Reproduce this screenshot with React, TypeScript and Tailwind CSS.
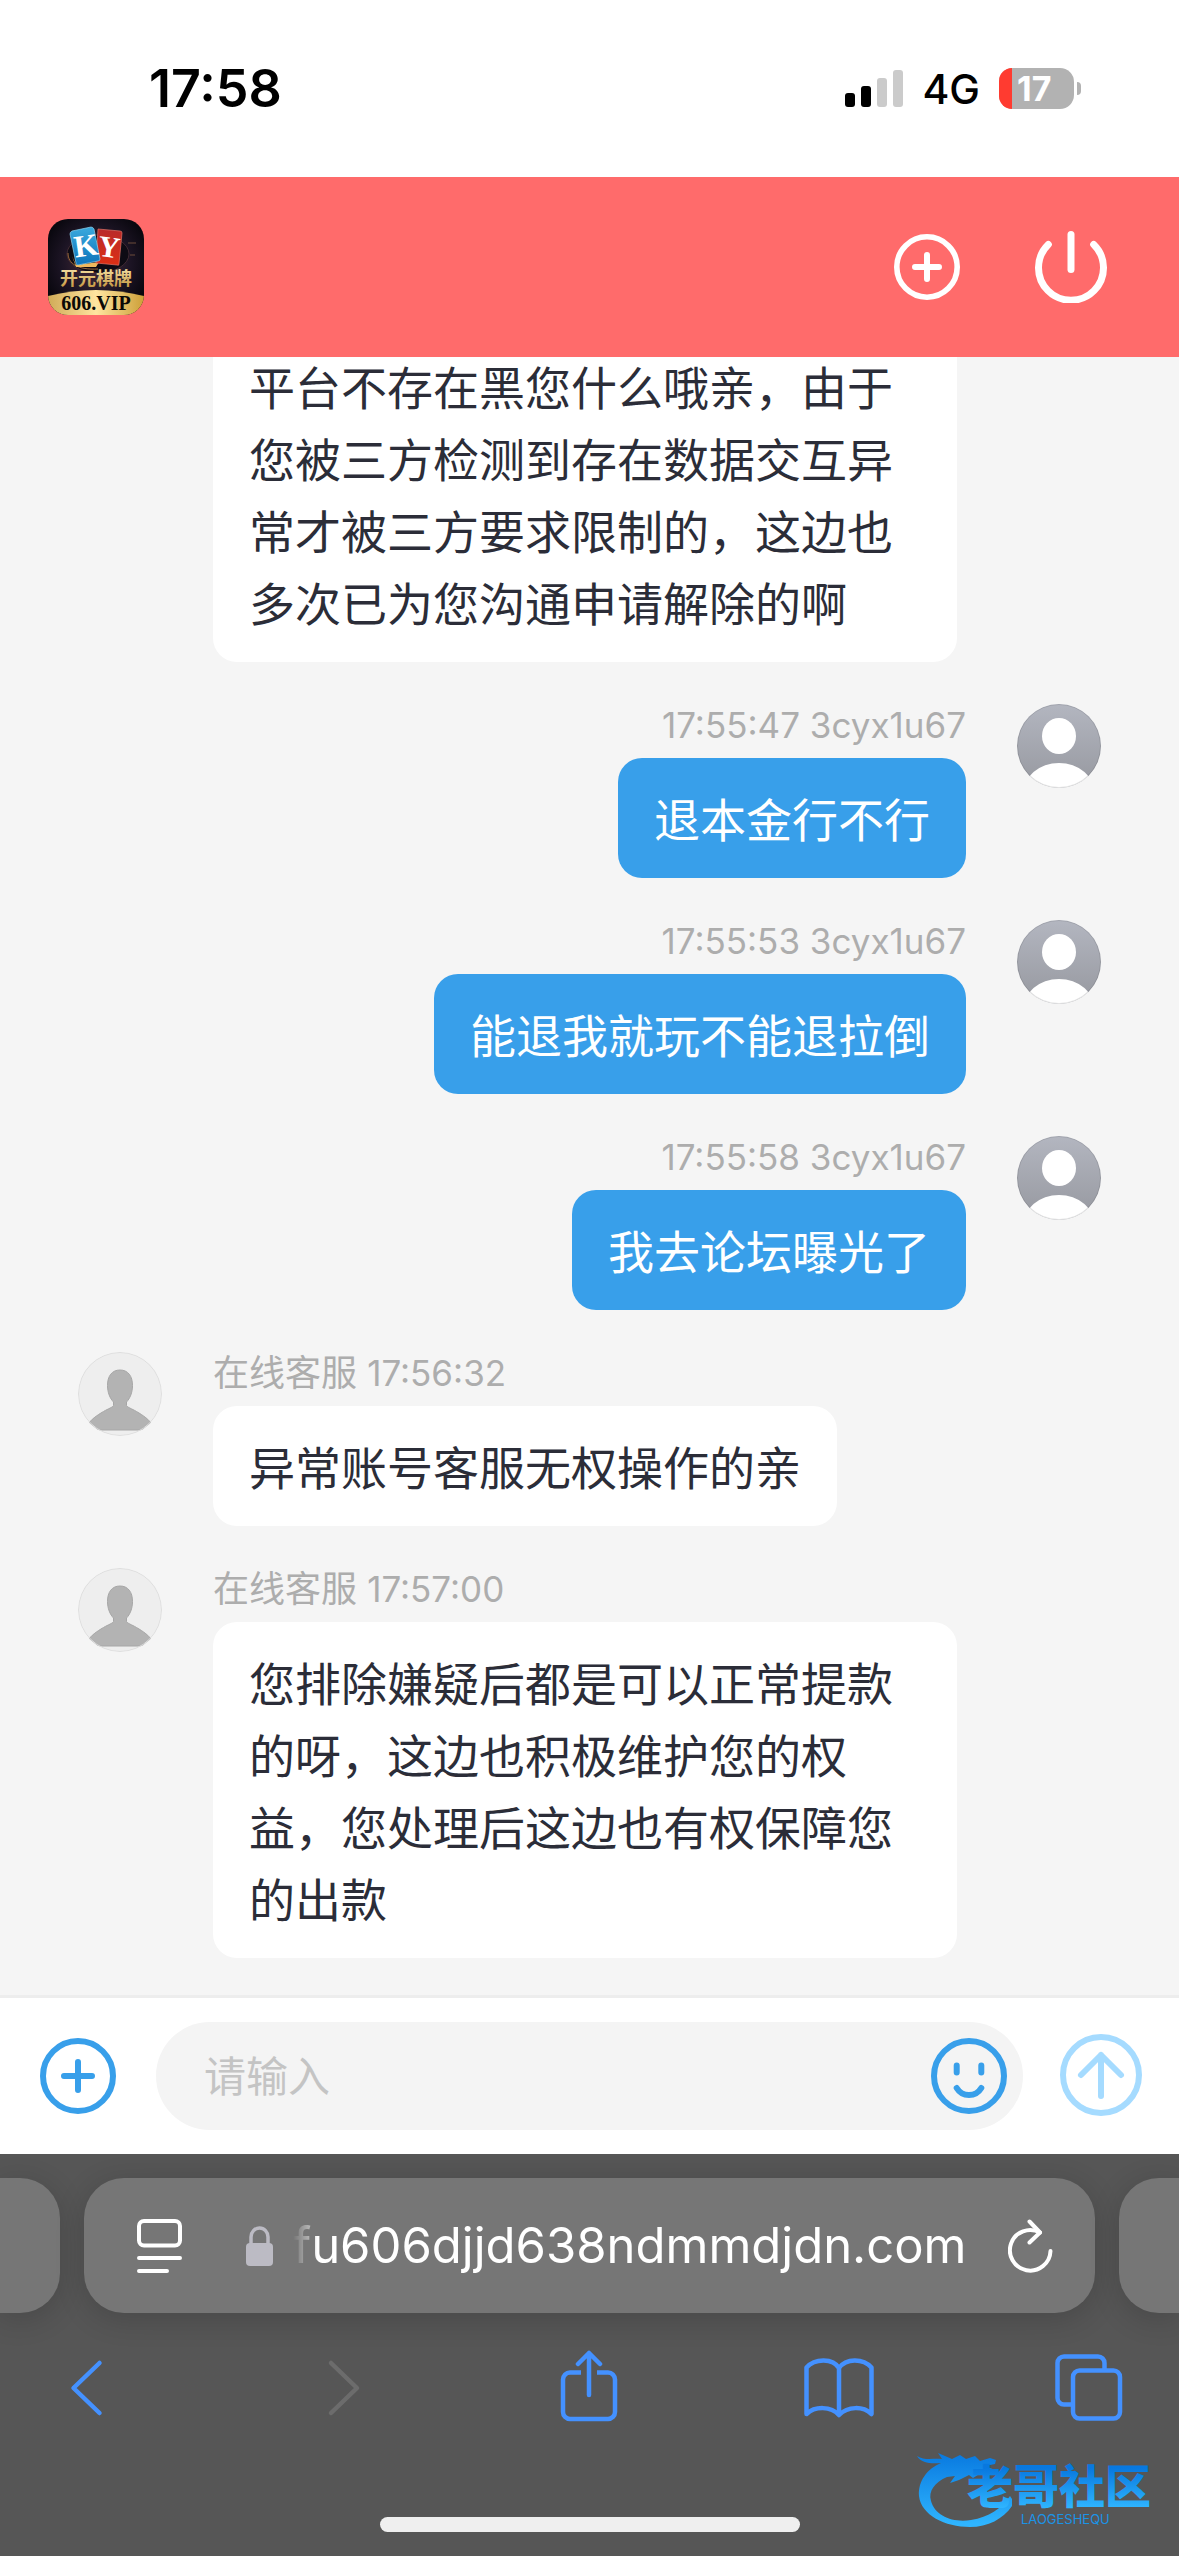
import { useState } from 'react';
import type { ReactNode } from 'react';

type Message = {
  id: number;
  from: 'agent' | 'user';
  text: string;
  time?: string;
};

const USER_NAME = '3cyx1u67';
const AGENT_NAME = '在线客服';

const messages: Message[] = [
  {
    id: 1,
    from: 'agent',
    text: '平台不存在黑您什么哦亲，由于您被三方检测到存在数据交互异常才被三方要求限制的，这边也多次已为您沟通申请解除的啊',
  },
  { id: 2, from: 'user', time: '17:55:47', text: '退本金行不行' },
  { id: 3, from: 'user', time: '17:55:53', text: '能退我就玩不能退拉倒' },
  { id: 4, from: 'user', time: '17:55:58', text: '我去论坛曝光了' },
  { id: 5, from: 'agent', time: '17:56:32', text: '异常账号客服无权操作的亲' },
  {
    id: 6,
    from: 'agent',
    time: '17:57:00',
    text: '您排除嫌疑后都是可以正常提款的呀，这边也积极维护您的权益，您处理后这边也有权保障您的出款',
  },
];

function StatusBar() {
  return (
    <div className="flex h-[177px] shrink-0 items-center justify-between bg-white pr-[98px] pl-[149px] text-black">
      <span className="text-[52px] leading-[60px] font-semibold">17:58</span>
      <div className="flex items-center gap-[19px]">
        <svg className="h-[37px] w-[58px]" viewBox="0 0 58 37">
          <rect x="0" y="23" width="10" height="14" rx="3" fill="#000" />
          <rect x="16" y="16" width="10" height="21" rx="3" fill="#000" />
          <rect x="32" y="8" width="10" height="29" rx="3" fill="#cbcbcb" />
          <rect x="48" y="0" width="10" height="37" rx="3" fill="#cbcbcb" />
        </svg>
        <span className="text-[41px] leading-[60px] font-medium">4G</span>
        <div className="flex items-center gap-[3px]">
          <div className="flex h-[41px] w-[75px] items-center rounded-[14px] bg-[#b2b2b2]">
            <div className="h-full w-[13px] rounded-l-[14px] bg-[#ff3b30]" />
            <span className="pl-[5px] text-[34px] leading-[41px] font-bold text-white">17</span>
          </div>
          <div className="h-[13px] w-1 rounded-r-full bg-[#b2b2b2]" />
        </div>
      </div>
    </div>
  );
}

function BrandLogo() {
  return (
    <svg className="h-24 w-24 rounded-[20px]" viewBox="0 0 96 96">
      <defs>
        <radialGradient id="brandBg" cx="0.5" cy="0.45" r="0.6">
          <stop offset="0" stopColor="#4b2e3c" />
          <stop offset="0.6" stopColor="#1c1424" />
          <stop offset="1" stopColor="#07060c" />
        </radialGradient>
        <linearGradient id="brandBlue" x1="0" y1="0" x2="0" y2="1">
          <stop offset="0" stopColor="#3aa9dd" />
          <stop offset="1" stopColor="#0d74bb" />
        </linearGradient>
        <linearGradient id="brandRed" x1="0" y1="0" x2="0" y2="1">
          <stop offset="0" stopColor="#b92a2a" />
          <stop offset="1" stopColor="#dc2f14" />
        </linearGradient>
        <linearGradient id="brandGold" x1="0" y1="0" x2="1" y2="0">
          <stop offset="0" stopColor="#d0ab57" />
          <stop offset="0.5" stopColor="#ffe5a0" />
          <stop offset="1" stopColor="#cda038" />
        </linearGradient>
        <linearGradient id="brandText" x1="0" y1="0" x2="0" y2="1">
          <stop offset="0" stopColor="#fff0b8" />
          <stop offset="1" stopColor="#c08f35" />
        </linearGradient>
      </defs>
      <rect width="96" height="96" fill="url(#brandBg)" />
      <ellipse cx="50" cy="35" rx="31" ry="19" fill="#0d0b14" stroke="#5b3c42" strokeOpacity="0.6" />
      <path d="M20 34 C20 45 30 51 50 50" fill="none" stroke="#d8914c" strokeOpacity="0.7" strokeWidth="1" />
      <path d="M24 37 L28 46 L51 43 L48 48 L28 48 Z" fill="#f0b85c" />
      <path d="M80 24h8M82 36h5" stroke="#6c4d3b" strokeWidth="1" />
      <path d="M50 10 L72 12 Q74 12 74 14 L71 45 Q71 47 69 46 L48 44 Z" fill="url(#brandRed)" stroke="#e07468" strokeWidth="0.7" />
      <path d="M24 12 L43 8 Q45 8 46 10 L52 40 Q52 42 50 42 L30 46 Q28 46 28 44 L22 15 Q22 13 24 12 Z" fill="url(#brandBlue)" stroke="#8ed2ee" strokeWidth="0.7" />
      <text x="38" y="37" textAnchor="middle" transform="rotate(-8 38 27)" fontSize="31" fontWeight="700" fill="#fff" className="font-['Liberation_Serif',serif]">
        K
      </text>
      <text x="61" y="38" textAnchor="middle" transform="rotate(8 61 28)" fontSize="30" fontWeight="700" fill="#fff" className="font-['Liberation_Serif',serif]">
        Y
      </text>
      <text x="48" y="66" textAnchor="middle" fontSize="18" fontWeight="700" fill="url(#brandText)" className="font-['Noto_Sans_CJK_SC',sans-serif]">
        开元棋牌
      </text>
      <path d="M0 77 Q48 65 96 77 V96 H0 Z" fill="url(#brandGold)" />
      <text x="48" y="91" textAnchor="middle" fontSize="20" fontWeight="700" fill="#0b0906" className="font-['Liberation_Serif',serif]">
        606.VIP
      </text>
    </svg>
  );
}

function ChatHeader() {
  return (
    <header className="flex h-[180px] shrink-0 items-center justify-between bg-[#ff6b6b] pr-[72px] pl-12 text-white">
      <BrandLogo />
      <div className="flex items-center gap-[75px]">
        <button type="button" aria-label="放大">
          <svg className="h-[66px] w-[66px]" viewBox="0 0 66 66" fill="none" stroke="currentColor" strokeLinecap="round">
            <circle cx="33" cy="33" r="30.2" strokeWidth="5.6" />
            <path d="M21 33h24M33 21v24" strokeWidth="6" />
          </svg>
        </button>
        <button type="button" aria-label="结束对话">
          <svg className="h-[72px] w-[72px]" viewBox="0 0 72 72" fill="none" stroke="currentColor" strokeLinecap="round" strokeWidth="7">
            <path d="M13.3 13.5A32.5 32.5 0 1 0 58.7 13.5" />
            <path d="M36 3.5v35" />
          </svg>
        </button>
      </div>
    </header>
  );
}

function UserAvatar() {
  return (
    <svg className="h-[84px] w-[84px] shrink-0 rounded-full" viewBox="0 0 84 84">
      <defs>
        <linearGradient id="userBg" x1="0" y1="0" x2="0" y2="1">
          <stop offset="0" stopColor="#b3b6c0" />
          <stop offset="1" stopColor="#96989f" />
        </linearGradient>
      </defs>
      <rect width="84" height="84" fill="url(#userBg)" />
      <ellipse cx="42" cy="32" rx="17" ry="18" fill="#fff" />
      <ellipse cx="42" cy="90" rx="36" ry="31" fill="#fff" />
      <circle cx="42" cy="42" r="41.5" fill="none" stroke="#000" strokeOpacity="0.1" />
    </svg>
  );
}

function AgentAvatar() {
  return (
    <svg className="h-[84px] w-[84px] shrink-0 rounded-full" viewBox="0 0 84 84">
      <rect width="84" height="84" fill="#eeeeee" />
      <path
        d="M42 18c8 0 12.5 6 12.5 15.5c0 7-2.5 13-6 16.5v3.5c1 2 5 3 10 6c7 4 13 8.5 15 12.5l-7.5 6H18l-7.5-6c2-4 8-8.5 15-12.5c5-3 9-4 10-6v-3.5c-3.5-3.500-6-9.500-6-16.500C29.500 24 34 18 42 18z"
        fill="#b3b3b3"
        stroke="#a6a6a6"
        strokeWidth="1"
      />
      <circle cx="42" cy="42" r="41.5" fill="none" stroke="#dedede" />
    </svg>
  );
}

function ChatMessage({ message }: { message: Message }) {
  if (message.from === 'user') {
    return (
      <li className="flex items-start justify-end gap-[51px]">
        <div className="flex flex-col items-end">
          <p className="h-[54px] text-[35px] leading-[42px] text-[#adadad]">
            {message.time} {USER_NAME}
          </p>
          <p className="max-w-[744px] rounded-3xl bg-[#389fea] px-9 pt-[26px] pb-[22px] text-[46px] leading-[72px] text-white">
            {message.text}
          </p>
        </div>
        <UserAvatar />
      </li>
    );
  }

  return (
    <li className="flex items-start gap-[51px]">
      {message.time ? <AgentAvatar /> : <div className="w-[84px] shrink-0" />}
      <div className="flex flex-col items-start">
        {message.time && (
          <p className="h-[54px] text-[36px] leading-[42px] text-[#adadad]">
            {AGENT_NAME} <span className="text-[35px]">{message.time}</span>
          </p>
        )}
        <p className="max-w-[744px] rounded-3xl bg-white px-9 pt-[26px] pb-[22px] text-[46px] leading-[72px] text-[#2b2d38]">
          {message.text}
        </p>
      </div>
    </li>
  );
}

function Composer() {
  const [draft, setDraft] = useState('');

  return (
    <form
      className="flex h-[159px] shrink-0 items-center border-t-[3px] border-[#ededed] bg-white pr-9 pl-10"
      onSubmit={(e) => {
        e.preventDefault();
        setDraft('');
      }}
    >
      <button type="button" aria-label="更多" className="text-[#389fea]">
        <svg className="h-[76px] w-[76px]" viewBox="0 0 76 76" fill="none" stroke="currentColor" strokeLinecap="round" strokeWidth="6">
          <circle cx="38" cy="38" r="35" />
          <path d="M24 38h28M38 24v28" />
        </svg>
      </button>
      <div className="ml-10 flex h-[108px] flex-1 items-center rounded-full bg-[#f4f4f4] pr-4 pl-12">
        <input
          type="text"
          aria-label="请输入"
          placeholder="请输入"
          value={draft}
          onChange={(e) => setDraft(e.target.value)}
          className="h-full min-w-0 flex-1 bg-transparent text-[42px] text-[#2b2d38] outline-none placeholder:text-[#c4c4c4]"
        />
        <button type="button" aria-label="表情" className="text-[#389fea]">
          <svg className="h-[76px] w-[76px]" viewBox="0 0 76 76" fill="none" stroke="currentColor" strokeLinecap="round" strokeWidth="6">
            <circle cx="38" cy="38" r="35" />
            <path d="M25.7 27.5v7M50.3 27.5v7" />
            <path d="M25.7 50a14.3 14.3 0 0 0 24.6 0" />
          </svg>
        </button>
      </div>
      <button type="submit" aria-label="发送" className="ml-9 text-[#a5dbff]">
        <svg className="h-[84px] w-[84px]" viewBox="0 0 84 84" fill="none" stroke="currentColor" strokeLinecap="round" strokeLinejoin="round" strokeWidth="6">
          <circle cx="42" cy="41" r="38" />
          <path d="M42 21v41M22 41l20-20l20 20" />
        </svg>
      </button>
    </form>
  );
}

function AddressBar() {
  return (
    <div className="flex h-[135px] gap-6">
      <div className="w-[60px] shrink-0 rounded-r-[40px] bg-[#767676] shadow-[0_6px_30px_rgba(0,0,0,0.16)]" />
      <div className="flex min-w-0 flex-1 items-center rounded-[40px] bg-[#767676] pr-[42px] pl-[53px] text-white shadow-[0_6px_30px_rgba(0,0,0,0.16)]">
        <button type="button" aria-label="页面设置">
          <svg className="h-[54px] w-[45px]" viewBox="0 0 45 54" fill="none" stroke="currentColor" strokeWidth="4" strokeLinecap="round">
            <rect x="2" y="2" width="41" height="24.5" rx="5" />
            <path d="M2 39h41M2 52h28" />
          </svg>
        </button>
        <svg className="ml-16 h-10 w-[27px] shrink-0" viewBox="0 0 27 40">
          <rect x="0" y="17" width="27" height="23" rx="4" fill="#bcbbc4" />
          <path d="M5 18V11a8.5 9 0 0 1 17 0v7" fill="none" stroke="#bcbbc4" strokeWidth="3.5" />
        </svg>
        <input
          type="text"
          readOnly
          aria-label="网址"
          value="fu606djjd638ndmmdjdn.com"
          className="ml-5 h-full min-w-0 flex-1 bg-transparent [mask-image:linear-gradient(to_right,transparent,rgba(0,0,0,0.5)_18px,black_24px)] text-[49px] outline-none"
        />
        <button type="button" aria-label="刷新">
          <svg className="h-[54px] w-[45px]" viewBox="0 0 45 54" fill="none" stroke="currentColor" strokeWidth="4" strokeLinecap="round" strokeLinejoin="round">
            <path d="M42.5 32A20.3 20.3 0 1 1 32 13.5" />
            <path d="M21.5 2.5L32 13.5L21.5 23.5" />
          </svg>
        </button>
      </div>
      <div className="w-[60px] shrink-0 rounded-l-[40px] bg-[#767676] shadow-[0_6px_30px_rgba(0,0,0,0.16)]" />
    </div>
  );
}

function ToolButton({ label, disabled, children }: { label: string; disabled?: boolean; children: ReactNode }) {
  return (
    <button type="button" aria-label={label} disabled={disabled} className="text-[#4491ff] disabled:text-[#6c6c6c]">
      <svg className="h-[72px] w-[72px]" viewBox="0 0 72 72" fill="none" stroke="currentColor" strokeWidth="4.5" strokeLinecap="round" strokeLinejoin="round">
        {children}
      </svg>
    </button>
  );
}

function Toolbar() {
  return (
    <nav className="flex items-center justify-between pt-[37px] pr-[55px] pl-[50px]">
      <ToolButton label="后退">
        <path d="M49.5 13L23.5 38L49.5 63" />
      </ToolButton>
      <ToolButton label="前进" disabled>
        <path d="M30 13L56 38L30 63" />
      </ToolButton>
      <ToolButton label="分享">
        <path d="M38 45V3M27 14L38 3L49 14" />
        <path d="M30 22.5H19a7 7 0 0 0-7 7V62a7 7 0 0 0 7 7H57a7 7 0 0 0 7-7V29.5a7 7 0 0 0-7-7H46" strokeLinecap="butt" />
      </ToolButton>
      <ToolButton label="书签">
        <path d="M37 18C31 8 13 8 4.5 17.5V64C13 56 29 56 37 65C46 56 61 56 69.5 64V17.5C61 8 44 8 37 18zV64" />
      </ToolButton>
      <ToolButton label="标签页">
        <rect x="21" y="20.5" width="47" height="48" rx="6.5" />
        <path d="M20 54.5H12a6.5 6.5 0 0 1-6.5-6.5V13A6.5 6.5 0 0 1 12 6.5H46a6.5 6.5 0 0 1 6.5 6.5V19" strokeLinecap="butt" />
      </ToolButton>
    </nav>
  );
}

function CommunityLogo() {
  return (
    <svg className="pointer-events-none absolute right-4 bottom-7 h-[84px] w-[250px]" viewBox="0 0 250 84">
      <defs>
        <linearGradient id="dragonBlue" gradientUnits="userSpaceOnUse" x1="0" y1="8" x2="0" y2="80">
          <stop offset="0" stopColor="#0878df" />
          <stop offset="1" stopColor="#2fb5ff" />
        </linearGradient>
        <linearGradient id="wordBlue" gradientUnits="userSpaceOnUse" x1="0" y1="24" x2="0" y2="64">
          <stop offset="0" stopColor="#0878df" />
          <stop offset="1" stopColor="#2fb5ff" />
        </linearGradient>
      </defs>
      <path
        d="M4 12C12 17 20 14 29 15L25 9L39 15L47 11L53 15L62 12L67 17L77 14L83 16L82 20L72 22L82 26L80 31L68 29L60 34L56 31L46 36L37 39L42 32L34 33C22 38 15 47 18 57C22 72 40 79 58 76C76 73 88 65 97 52L99 55V62C90 75 75 83 57 83C32 83 8 71 6 52C5 37 14 25 28 19C18 20 8 19 4 12Z"
        fill="url(#dragonBlue)"
      />
      <text x="54" y="59" fontSize="46" fontWeight="900" fill="url(#wordBlue)" className="font-['Noto_Sans_CJK_SC',sans-serif]">
        老哥社区
      </text>
      <text x="108" y="80" fontSize="13" fill="#1b93e6" className="font-['Inter',sans-serif]">
        LAOGESHEQU
      </text>
    </svg>
  );
}

export default function App() {
  return (
    <div className="relative flex h-screen flex-col overflow-hidden bg-[#f5f5f5] font-['Inter','Noto_Sans_CJK_SC',sans-serif]">
      <StatusBar />
      <ChatHeader />
      <main className="flex min-h-0 flex-1 flex-col justify-end overflow-hidden px-[78px] pb-[37px]">
        <ul className="flex flex-col gap-[42px]">
          {messages.map((message) => (
            <ChatMessage key={message.id} message={message} />
          ))}
        </ul>
      </main>
      <Composer />
      <footer className="flex h-[402px] shrink-0 flex-col bg-[#565656] pt-6">
        <AddressBar />
        <Toolbar />
        <div className="mt-auto mb-6 h-[15px] w-[420px] self-center rounded-full bg-[#efefef]" />
      </footer>
      <CommunityLogo />
    </div>
  );
}
